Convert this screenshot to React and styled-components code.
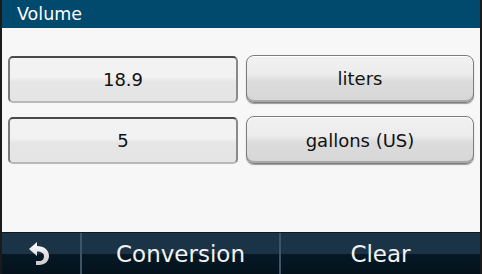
import React from 'react';
import styled, { createGlobalStyle } from 'styled-components';

const GlobalStyle = createGlobalStyle`
  html, body {
    margin: 0;
    padding: 0;
    background: #f7f7f7;
  }
  * { box-sizing: border-box; }
`;

const Screen = styled.div`
  width: 482px;
  height: 274px;
  display: flex;
  flex-direction: column;
  background: #f7f7f7;
  border-left: 2px solid #1a1a1a;
  border-right: 2px solid #1a1a1a;
  font-family: 'DejaVu Sans', sans-serif;
  overflow: hidden;
`;

const Header = styled.div`
  height: 28px;
  flex-shrink: 0;
  background: #01496d;
  color: #ffffff;
  font-size: 17.5px;
  line-height: 28px;
  margin: 0 -2px;
  padding-left: 17px;
`;

const Body = styled.div`
  flex: 1;
  display: flex;
  flex-direction: column;
  gap: 13px;
  padding: 26px 7px 0 6px;
`;

const Row = styled.div`
  display: grid;
  grid-template-columns: 230px 228px;
  gap: 8px;
  align-items: center;
`;

const Field = styled.div`
  height: 47px;
  border-radius: 5px;
  border: 2px solid #4a4a4a;
  border-bottom-color: #b8b8b8;
  border-right-color: #8a8a8a;
  border-left-color: #7a7a7a;
  background: linear-gradient(#f2f2f2 0%, #f2f2f2 45%, #e6e6e6 55%, #e4e4e4 100%);
  display: flex;
  align-items: center;
  justify-content: center;
  font-size: 18px;
  color: #111;
  margin-top: ${p => p.$offset || 0}px;
`;

const UnitButton = styled.div`
  height: 48px;
  border-radius: 8px;
  border: 1px solid #7d7d7d;
  box-shadow: inset 0 -2px 0 #a8a8a8, inset 0 1px 0 #ffffff, 0 1px 1px #999;
  background: linear-gradient(#f1f1f1 0%, #ececec 40%, #dcdcdc 55%, #d6d6d6 100%);
  display: flex;
  align-items: center;
  justify-content: center;
  font-size: 18px;
  color: #111;
  margin-top: ${p => p.$offset || 0}px;
`;

const Toolbar = styled.div`
  height: 42px;
  flex-shrink: 0;
  display: grid;
  grid-template-columns: 82px 199px 1fr;
  margin: 0 -2px;
  background: linear-gradient(#1b3346 0%, #1b3346 50%, #061825 52%, #04121c 100%);
  border-top: 1px solid #0b1a26;
`;

const ToolButton = styled.div`
  display: flex;
  align-items: center;
  justify-content: center;
  color: #f2f2f2;
  font-size: 23px;
  border-right: 2px solid #3f5566;
  &:last-child { border-right: 2px solid #5c6f7e; }
`;

function BackIcon() {
  return (
    <svg width="26" height="26" viewBox="0 0 26 24">
      <defs>
        <linearGradient id="bk" x1="0" y1="0" x2="0" y2="1">
          <stop offset="0" stopColor="#ffffff" />
          <stop offset="1" stopColor="#c9c9c9" />
        </linearGradient>
      </defs>
      <path
        d="M2 7 L10 0 L10 4 C17 4 22 8 22 14 C22 19 18 23 12 23 L9 23 L9 19 L12 19 C15.5 19 17 17 17 14 C17 11 14 9.5 10 9.5 L10 14 Z"
        fill="url(#bk)"
      />
    </svg>
  );
}

export default function App() {
  return (
    <>
      <GlobalStyle />
      <Screen>
        <Header>Volume</Header>
        <Body>
          <Row>
            <Field $offset={2}>18.9</Field>
            <UnitButton>liters</UnitButton>
          </Row>
          <Row>
            <Field $offset={1}>5</Field>
            <UnitButton>gallons (US)</UnitButton>
          </Row>
        </Body>
        <Toolbar>
          <ToolButton><BackIcon /></ToolButton>
          <ToolButton>Conversion</ToolButton>
          <ToolButton>Clear</ToolButton>
        </Toolbar>
      </Screen>
    </>
  );
}
